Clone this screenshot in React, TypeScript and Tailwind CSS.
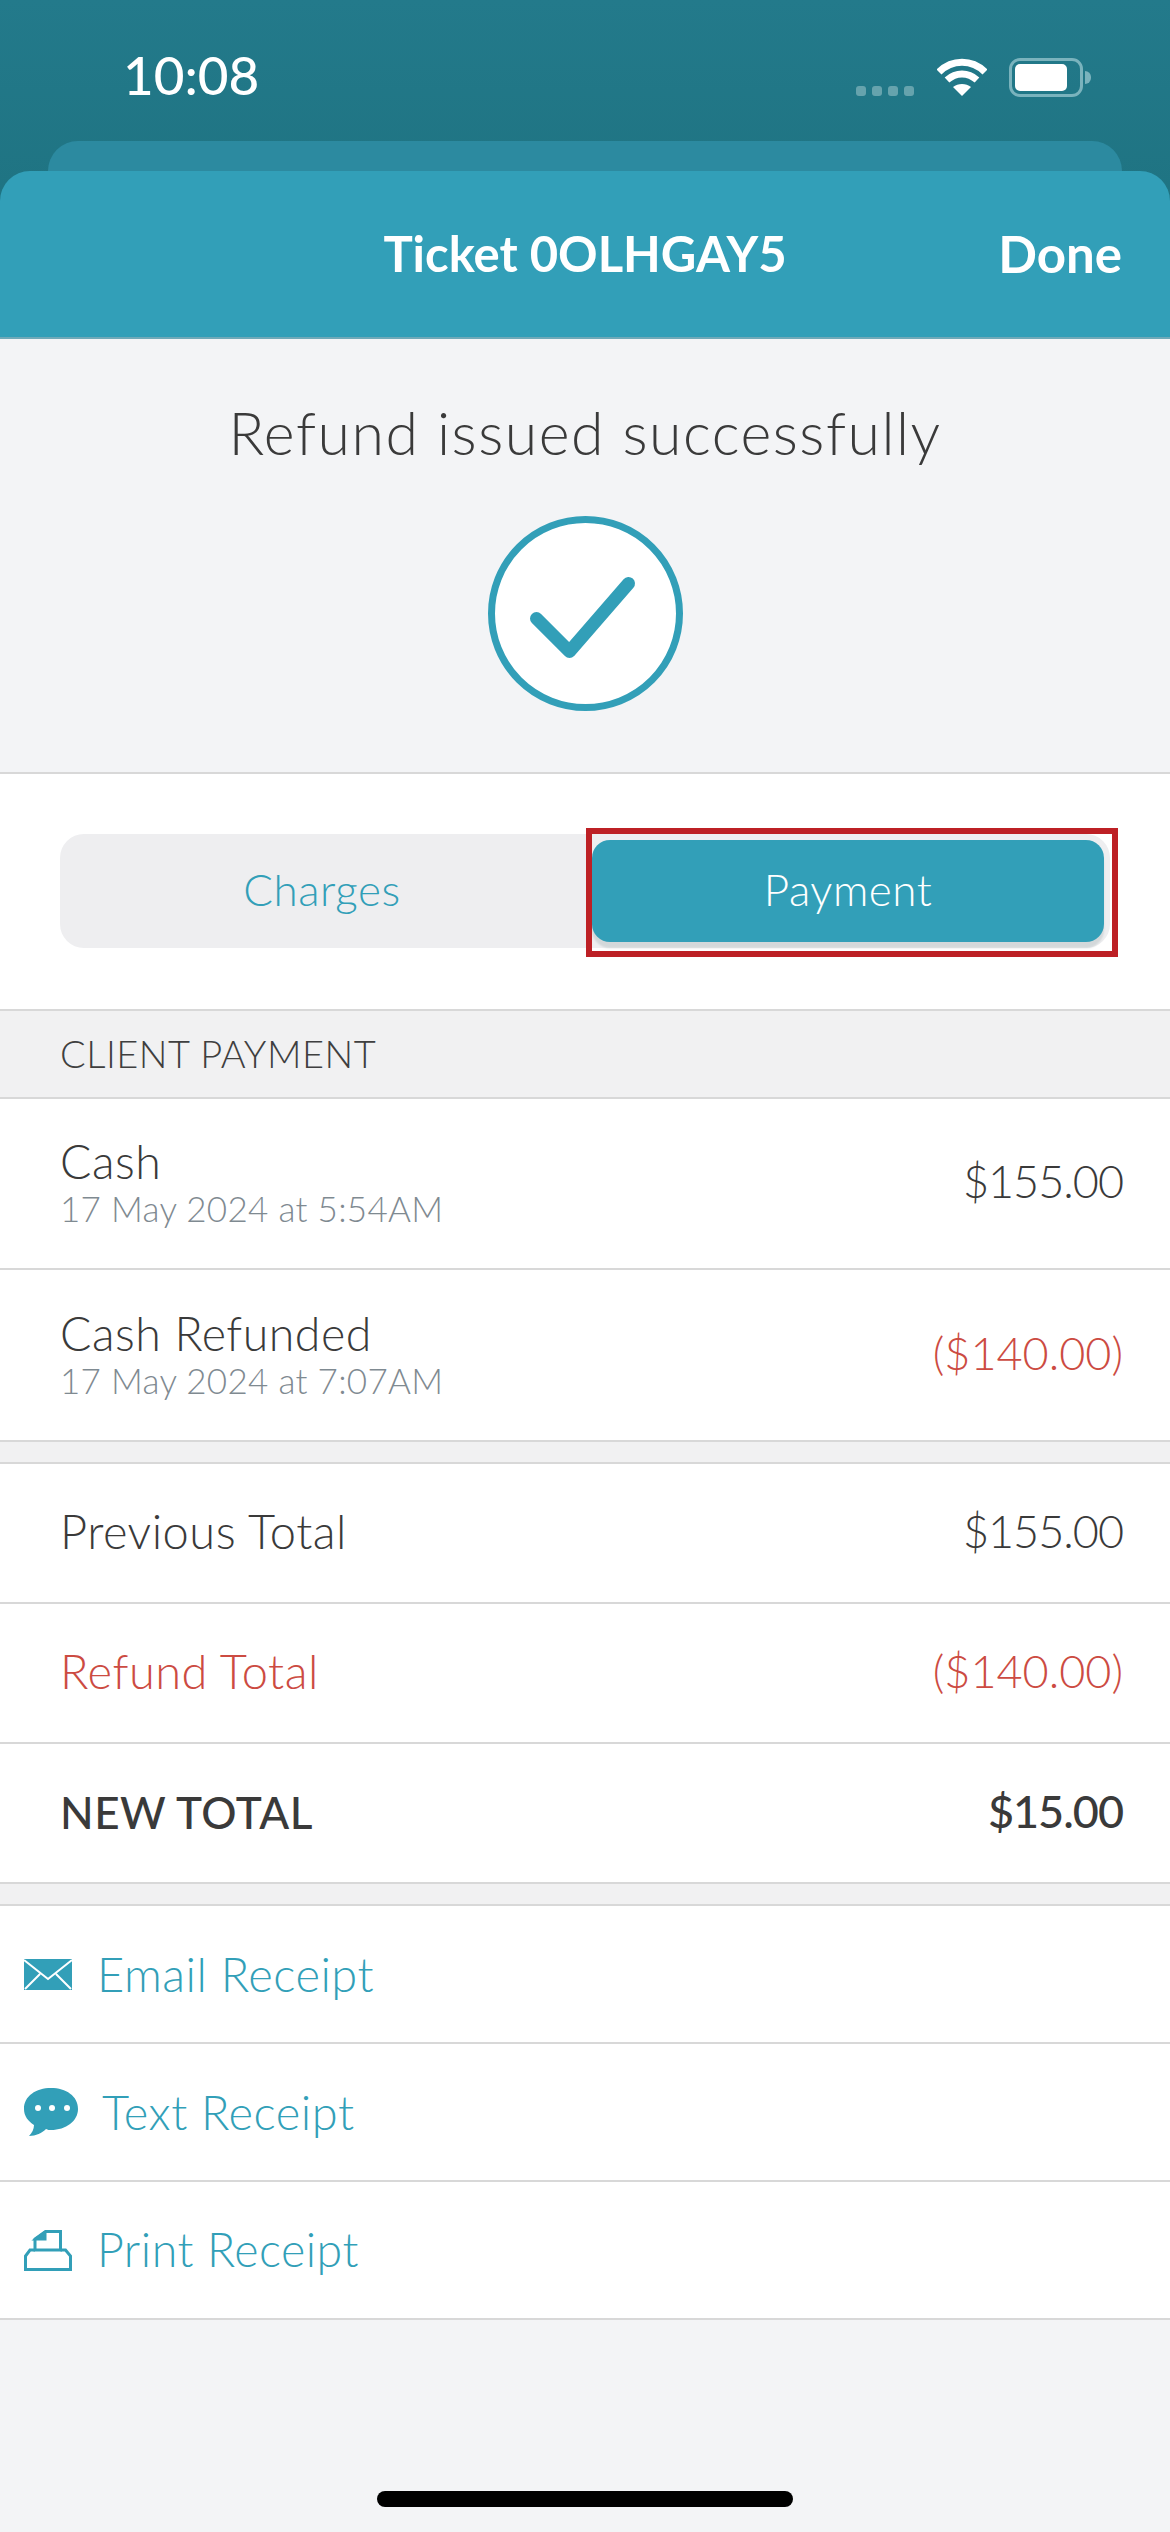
const teal = 'text-[#329fb8]';

function StatusBar() {
  return (
    <div className="flex items-start justify-between h-[141px] pl-[123px] pr-[79px] pt-[45px]">
      <span className="text-[53px] leading-[60px] font-medium text-white">10:08</span>
      <div className="flex items-start mt-[13px]">
        {/* signal dots */}
        <div className="flex gap-[6px] mt-[28px] mr-[23px]">
          <span className="w-[10px] h-[10px] rounded-[3px] bg-[#66a3ad]" />
          <span className="w-[10px] h-[10px] rounded-[3px] bg-[#66a3ad]" />
          <span className="w-[10px] h-[10px] rounded-[3px] bg-[#66a3ad]" />
          <span className="w-[10px] h-[10px] rounded-[3px] bg-[#66a3ad]" />
        </div>
        <svg width="50" height="38" viewBox="0 0 50 38" fill="none" className="mr-[22px]">
          <path d="M2 14 C15 1 35 1 48 14" stroke="#fff" strokeWidth="7" />
          <path d="M10 22 C19 14 31 14 40 22" stroke="#fff" strokeWidth="7" />
          <path d="M25 38 L16 29 C21 25 29 25 34 29 Z" fill="#fff" />
        </svg>
        <div className="flex items-center">
          <div className="w-[74px] h-[39px] rounded-[11px] border-[3px] border-[#7ab3bd] p-[3px]">
            <div className="w-[52px] h-full rounded-[5px] bg-white" />
          </div>
          <span className="w-[6px] h-[13px] ml-[2px] rounded-r-full bg-[#7ab3bd]" />
        </div>
      </div>
    </div>
  );
}

function Row({ children, className = '' }: { children: React.ReactNode; className?: string }) {
  return (
    <div className={`flex items-center justify-between bg-white pl-[60px] pr-[47px] pb-[3px] border-b-2 border-[#d8d8d8] ${className}`}>
      {children}
    </div>
  );
}

function Amount({ value, className }: { value: string; className: string }) {
  const spacing = value.startsWith('(') ? 'tracking-[0px]' : 'tracking-[-1px]';
  return <span className={`text-[45px] ${spacing} ${className}`}>{value}</span>;
}

function PaymentRow({ name, date, amount, red, className }: { name: string; date: string; amount: string; red?: boolean; className: string }) {
  return (
    <Row className={className}>
      <div className="flex flex-col">
        <span className="text-[46.5px] leading-[52px] font-light text-[#3a3a3a] tracking-[0.5px]">{name}</span>
        <span className="text-[35px] leading-[42px] font-light text-[#7f8a91] tracking-[0.3px]">{date}</span>
      </div>
      <Amount value={amount} className={`font-light ${red ? 'text-[#cc4b42]' : 'text-[#3a3a3a]'}`} />
    </Row>
  );
}

function TotalRow({ label, amount, className, labelSize }: { label: string; amount: string; className: string; labelSize: string }) {
  return (
    <Row className="h-[140px]">
      <span className={`tracking-[0.5px] ${labelSize} ${className}`}>{label}</span>
      <Amount value={amount} className={className} />
    </Row>
  );
}

function ReceiptRow({ icon, label, gap, size }: { icon: React.ReactNode; label: string; gap: string; size: string }) {
  return (
    <div className="flex items-center h-[138px] bg-white pl-[24px] border-b-2 border-[#d8d8d8]">
      {icon}
      <span className={`font-light tracking-[0.5px] ${size} ${teal} ${gap}`}>{label}</span>
    </div>
  );
}

export default function App() {
  return (
    <div className="flex flex-col w-[1170px] h-[2532px] bg-[#f3f4f6] font-['Lato',sans-serif]">
      {/* Top chrome */}
      <div className="bg-gradient-to-b from-[#237a8b] to-[#1c6f7c]">
        <StatusBar />
        <div className="h-[30px] mx-[48px] rounded-t-[30px] bg-[#2c8aa0]" />
        <div className="relative flex items-center justify-center h-[168px] rounded-t-[30px] bg-[#329fb8] border-b-2 border-[#6fa9b8]">
          <span className="text-[49px] font-bold text-white">Ticket 0OLHGAY5</span>
          <span className="absolute right-[48px] text-[51px] font-bold text-white">Done</span>
        </div>
      </div>

      {/* Success banner */}
      <div className="flex flex-col items-center h-[435px] pt-[59px] border-b-2 border-[#d8d8d8]">
        <span className="text-[59px] leading-[70px] font-light text-[#3a3a3a] tracking-[1.5px]">Refund issued successfully</span>
        <div className="flex items-center justify-center w-[195px] h-[195px] mt-[48px] rounded-full bg-white border-[7px] border-[#329fb8]">
          <svg width="120" height="100" viewBox="0 0 120 100" fill="none">
            <path d="M11.5 54.5 L44.5 87.5 L103.5 19.5" stroke="#329fb8" strokeWidth="13" strokeLinecap="round" strokeLinejoin="round" />
          </svg>
        </div>
      </div>

      {/* Segmented tabs */}
      <div className="flex items-center h-[235px] px-[60px] pb-[2px] bg-white">
        <div className="relative flex items-center w-[1058px] h-[114px] rounded-[24px] bg-[#eeeef0]">
          <div className="flex items-center justify-center w-[532px] pr-[8px] pb-[3px]">
            <span className={`text-[44px] font-light tracking-[0.5px] ${teal}`}>Charges</span>
          </div>
          <div className="flex items-center justify-center w-[512px] h-[102px] pb-[3px] rounded-[18px] bg-[#329fb8] shadow-[0_6px_2px_#d3d8da]">
            <span className="text-[44px] font-light tracking-[0.5px] text-white">Payment</span>
          </div>
          {/* annotation box */}
          <div className="absolute left-[526px] top-[-6px] w-[532px] h-[129px] border-[6px] border-[#bd2025]" />
        </div>
      </div>

      <div className="flex items-center h-[90px] pl-[60px] pb-[2px] bg-[#f1f1f2] border-y-2 border-[#d8d8d8]">
        <span className="text-[38px] font-light text-[#3f3f3f] tracking-[0.5px]">CLIENT PAYMENT</span>
      </div>

      <PaymentRow className="h-[171px]" name="Cash" date="17 May 2024 at 5:54AM" amount="$155.00" />
      <PaymentRow className="h-[172px]" name="Cash Refunded" date="17 May 2024 at 7:07AM" amount="($140.00)" red />

      <div className="h-[22px] bg-[#f1f1f2] border-b-2 border-[#d8d8d8]" />

      <TotalRow label="Previous Total" amount="$155.00" labelSize="text-[47px]" className="font-light text-[#3a3a3a]" />
      <TotalRow label="Refund Total" amount="($140.00)" labelSize="text-[47px]" className="font-light text-[#cc4b42]" />
      <TotalRow label="NEW TOTAL" amount="$15.00" labelSize="text-[44px]" className="font-medium text-[#3a3a3a]" />

      <div className="h-[22px] bg-[#f1f1f2] border-b-2 border-[#d8d8d8]" />

      <ReceiptRow
        label="Email Receipt"
        gap="ml-[25px]"
        size="text-[47px]"
        icon={
          <svg width="48" height="31" viewBox="0 0 48 31" fill="#329fb8">
            <rect width="48" height="31" />
            <path d="M0 1 L24 20 L48 1 M1 30 L16 15 M47 30 L32 15" fill="none" stroke="#fff" strokeWidth="2" />
          </svg>
        }
      />
      <ReceiptRow
        label="Text Receipt"
        gap="ml-[24px]"
        size="text-[47px]"
        icon={
          <svg width="54" height="48" viewBox="0 0 54 48">
            <path d="M27 0 C12 0 0 8 0 21 C0 28 4 33 10 37 C10 41 8 45 5 48 C12 48 18 45 22 41 C24 42 25 42 27 42 C42 42 54 33 54 21 C54 8 42 0 27 0 Z" fill="#329fb8" />
            <circle cx="14" cy="20" r="3" fill="#fff" />
            <circle cx="28" cy="20" r="3" fill="#fff" />
            <circle cx="43" cy="20" r="3" fill="#fff" />
          </svg>
        }
      />
      <ReceiptRow
        label="Print Receipt"
        gap="ml-[25px]"
        size="text-[46.5px]"
        icon={
          <svg width="48" height="41" viewBox="0 0 48 41" fill="none" stroke="#329fb8" strokeWidth="3">
            <path d="M11 20 V9 L21.5 1.5 H36.5 V20 H11 Z" />
            <path d="M12 9 L21 2.5 V9 Z" fill="#329fb8" />
            <path d="M11 20 H6 L1.5 26 V39.5 H46.5 V26 L41.5 20 H36.5" />
          </svg>
        }
      />

      {/* Home indicator */}
      <div className="flex-1 flex items-end justify-center pb-[25px]">
        <div className="w-[416px] h-[16px] rounded-full bg-black" />
      </div>
    </div>
  );
}
